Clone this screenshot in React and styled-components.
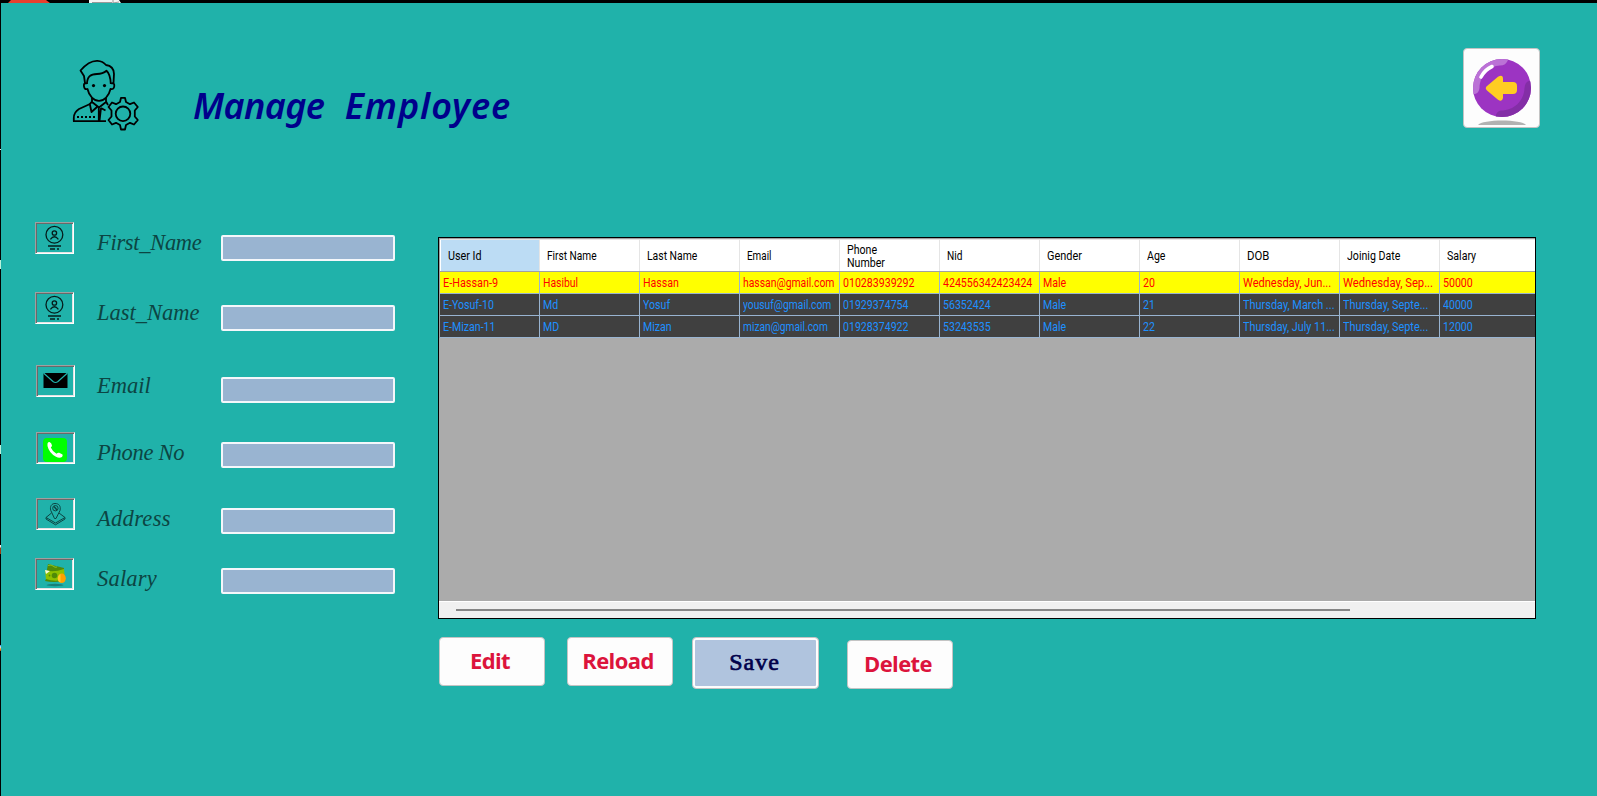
import React from "react";
import styled, { createGlobalStyle } from "styled-components";

const GlobalStyle = createGlobalStyle`
  * { box-sizing: border-box; }
  body { margin: 0; background: #20b2aa; }
`;

const Screen = styled.div`
  width: 1597px;
  height: 796px;
  display: grid;
  grid-template: 3px 1fr / 1px 1fr;
  background: #20b2aa;
  overflow: hidden;
`;

const TopStrip = styled.div`
  grid-column: 1 / -1;
  background: #000;
  display: flex;
  svg { display: block; }
`;

const SideStrip = styled.div`
  background: linear-gradient(
    #000 146px, #e8f4f0 146px, #e8f4f0 147px, #000 147px,
    #000 257px, #b9f3dc 257px, #b9f3dc 266px, #000 266px,
    #000 442px, #b9f3dc 442px, #b9f3dc 451px, #000 451px,
    #000 542px, #f3e9ee 542px, #f3e9ee 544px, #9a3c10 545px, #9a3c10 551px, #000 551px,
    #000 642px, #1f7fe0 642px, #d8ecff 644px, #ff9c1a 646px, #a04a10 648px, #000 648px
  );
`;

const Window = styled.main`
  display: flex;
  flex-direction: column;
`;

const Header = styled.header`
  height: 216px;
  display: flex;
  align-items: flex-start;
  padding: 45px 57px 0 70px;
`;

const HeaderArt = styled.div`
  width: 70px;
  height: 76px;
  margin-top: 10px;
  svg { display: block; }
`;

const Title = styled.h1`
  margin: 32px 0 0 52px;
  flex: 1;
  font: italic 600 36px/52px "Noto Sans", "Open Sans", sans-serif;
  word-spacing: 11px;
  color: #00008b;
  white-space: nowrap;
`;

const TitleWord = styled.span`
  letter-spacing: ${(p) => p.$track}px;
`;

const BackButton = styled.button`
  width: 77px;
  height: 80px;
  padding: 0;
  border: 1px solid #c4c4c4;
  border-radius: 4px;
  background: #fdfdfd;
  svg { display: block; }
`;

const Content = styled.div`
  display: flex;
`;

const Form = styled.form`
  width: 437px;
  padding: 3px 0 0 34px;
`;

const Field = styled.div`
  display: flex;
  align-items: flex-start;
  height: ${(p) => p.$height}px;
`;

const IconFrame = styled.div`
  width: 39px;
  height: 32px;
  margin-left: ${(p) => p.$indent}px;
  margin-right: ${(p) => 23 - p.$indent}px;
  padding: 1px;
  border: 1px solid;
  border-color: #a0a0a0 #fff #fff #a0a0a0;
  box-shadow: inset 1px 1px #696969, inset -1px -1px #e3e3e3;
  svg { display: block; }
`;

const FieldLabel = styled.label`
  width: 124px;
  padding-top: 8px;
  font: italic 400 22.5px/26px "Liberation Serif", serif;
  letter-spacing: ${(p) => p.$track}px;
  color: #0c4543;
  white-space: nowrap;
`;

const FieldInput = styled.input`
  width: 174px;
  height: 26px;
  margin-top: ${(p) => p.$drop}px;
  padding: 0 4px;
  border: 2px solid #f4f7fb;
  border-radius: 2px;
  background: #99b4d1;
`;

const Workspace = styled.section`
  width: 1098px;
  padding-top: 18px;
`;

const Grid = styled.div`
  height: 382px;
  border: 1px solid #000;
  background: #ababab;
  display: flex;
  flex-direction: column;
  font: 13px/16px "Roboto", sans-serif;
  overflow: hidden;
`;

const HeadRow = styled.div`
  display: flex;
  width: 1096px;
  height: 34px;
  flex: none;
  border-top: 1px solid #a0a0a0;
  border-left: 1px solid #a0a0a0;
  border-bottom: 1px solid #a0a0a0;
  background: #fff;
  overflow: hidden;
`;

const HeadCell = styled.div`
  flex: 0 0 100px;
  min-width: 0;
  display: flex;
  align-items: center;
  padding: 0 12px 0 ${(p) => (p.$current ? 8 : 7)}px;
  line-height: 13px;
  color: #000;
  border-right: 1px solid #e5e5e5;
  border-top: 1px solid #e5e5e5;
  ${(p) => p.$current && "background: #bcdcf4; box-shadow: inset 1px 0 #fff;"}
`;

const BodyRow = styled.div`
  display: flex;
  width: 1096px;
  height: 22px;
  flex: none;
  border-left: 1px solid #a0a0a0;
  background: ${(p) => (p.$active ? "#ffff00" : "#404040")};
  color: ${(p) => (p.$active ? "#ff0000" : "#1e90ff")};
  overflow: hidden;
`;

const Cell = styled.div`
  flex: 0 0 100px;
  min-width: 0;
  padding: 3px 0 0 3px;
  border-right: 1px solid #99b4d1;
  border-bottom: 1px solid #99b4d1;
  white-space: nowrap;
  overflow: hidden;
`;

const Narrow = styled.span`
  display: inline-block;
  transform: scaleX(${(p) => p.$ratio});
  transform-origin: left;
`;

const Scrollbar = styled.div`
  height: 17px;
  margin-top: auto;
  border-top: 1px solid #fff;
  background: #f0f0f0;
  padding: 7px 0 0 17px;
`;

const Thumb = styled.div`
  width: 894px;
  height: 2px;
  background: #858585;
`;

const Actions = styled.div`
  display: flex;
  align-items: flex-start;
  padding: 18px 0 0 1px;
`;

const ActionButton = styled.button`
  width: 106px;
  height: 49px;
  margin: ${(p) => p.$margin};
  padding: 0 4px 3px 0;
  border: 1px solid #c4c4c4;
  border-radius: 4px;
  background: #fdfdfd;
  font: 700 22px/30px "Open Sans", "Noto Sans", sans-serif;
  letter-spacing: -0.6px;
  color: #dc143c;
`;

const SaveButton = styled(ActionButton)`
  width: 127px;
  height: 52px;
  padding: 0 2px 2px 0;
  background: #b0c4de;
  box-shadow: inset 0 0 0 2px #fdfdfd;
  font: 400 24px/30px "Liberation Serif", serif;
  letter-spacing: 1px;
  -webkit-text-stroke: 0.7px #00004b;
  color: #00004b;
`;

const TopArt = () => (
  <svg width="130" height="3">
    <path d="M8 3 L11 0 H46 L50 3Z" fill="#e8402f" />
    <path d="M89 0h30l2 3H89z" fill="#f5f5f5" />
    <path d="M92 2.5h20M113 0v3l6-1" stroke="#999" fill="none" />
  </svg>
);

const EmployeeArt = () => (
  <svg width="70" height="76" viewBox="71 58 70 76" fill="none" stroke="#000" strokeWidth="1.8" strokeLinejoin="round">
    <path d="M85 83 L84 76 L80.500 70.500 C86 64 92 60.500 97.500 60.800 C102 61 104 62.500 106 65 C111 65.500 113.800 69 114 74 L113.500 83" />
    <path d="M87 84 C87 76 91 74 97 74 C102 74 104 73 106.500 70.800 C109 73 110.500 76 110.800 84" />
    <path d="M87 83.500 C84 82.500 83.600 84.500 84 86.500 C84.400 89 85.500 89.500 87.500 89 C89 96 94 100.800 99 100.800 C104 100.800 109 96 110.500 89 C113 89.500 114 88.500 114.300 86 C114.600 83.500 113 82.800 111 83.500" />
    <path d="M92 98 V102 L99 107.500 L106 102 V98 M92 101.500 L89.800 104 L91.500 112 L97 107 M106 101.500 L108 105 M101 108 L105.500 110.500 M98.800 108 V121 M101 108 L99.500 121" />
    <path d="M90 104 L79 109 C75 111.500 73.800 114 73.800 118 V121.200 H106" />
    <path d="M77 117h20" strokeDasharray="2 2" />
    <path d="M121 97.800 h4 l1 4.200 4 2.200 4-1.700 3.800 4.500-3 3.500 v6 l3 3.500-3.800 4.500-4-1.700-4 2.200-1 4.500h-4l-1-4.500-4-2.200-4 1.700-3.500-4.500 3-3.500v-6l-3-3.500 3.500-4.500 4 1.700 4-2.200z" />
    <circle cx="123" cy="113.800" r="7.300" />
    <circle cx="93.500" cy="85.600" r="1.600" fill="#000" stroke="none" />
    <circle cx="104.500" cy="85.600" r="1.600" fill="#000" stroke="none" />
  </svg>
);

const BackArt = () => (
  <svg width="75" height="78" viewBox="1464 49 75 78">
    <defs><clipPath id="ball"><circle cx="1502" cy="88" r="29" /></clipPath></defs>
    <path d="M1478 125 C1482 119 1522 119 1526 125Z" fill="#b2b2b2" />
    <g clipPath="url(#ball)">
      <rect x="1470" y="55" width="64" height="66" fill="#9c34c2" />
      <path d="M1472 94 V57 H1508 V60 Q1506 65.500 1500 65.500 C1489 66 1480 75 1479.500 88 Q1479 93 1475 94Z" fill="#bb72d6" />
      <path d="M1532 81 H1529 Q1525 82 1524.500 88 C1524 101 1514 110.500 1501 110.500 Q1497 111 1496 115 V119 H1532Z" fill="#832ea6" />
    </g>
    <path d="M1481 77 Q1485 69.500 1492 66.500" stroke="#fff" strokeWidth="3.600" strokeLinecap="round" fill="none" />
    <path d="M1487 86 L1498 76.800 Q1503 74 1503 79 V82 H1513 Q1517 82 1517 86 V90 Q1517 94 1513 94 H1503 V98 Q1502 102.500 1498 99.700 L1487 90.500 Q1484.500 88 1487 86Z" fill="#ffcd23" />
  </svg>
);

const PersonArt = () => (
  <svg width="36" height="28" viewBox="0 0 36 28" fill="none" stroke="#051c1b" strokeWidth="1.300">
    <circle cx="17.400" cy="10.700" r="8.400" />
    <circle cx="17.400" cy="9" r="2.200" />
    <path d="M13.400 15.300 Q17.400 10.200 21.400 15.300" />
    <path d="M11 22h13M13 25h5M20 25h2" strokeWidth="1.500" />
  </svg>
);

const MailArt = () => (
  <svg width="36" height="28" viewBox="0 0 36 28">
    <rect x="5.500" y="6" width="24" height="15" fill="#000" />
    <path d="M5.500 6 L15 14.500 Q17.500 16.500 20 14.500 L29.500 6" fill="none" stroke="#20b2aa" strokeWidth="1.200" />
  </svg>
);

const PhoneArt = () => (
  <svg width="36" height="28" viewBox="0 0 36 28">
    <rect x="5" y="4" width="24" height="24" rx="4" fill="#0f0" />
    <path d="M9.500 9.500 Q10 7.500 11.500 8 Q13.500 8.500 14 11.500 Q14 12.500 12.800 13.500 Q14.500 17.500 18.500 19.700 Q20 18.300 21.200 18.800 L24.500 20.500 Q25 21.500 24 23 Q21.500 24.500 18 22.800 Q11 19 9.500 12Z" fill="#fff" />
  </svg>
);

const PinArt = () => (
  <svg width="36" height="28" viewBox="0 0 36 28" fill="none" stroke="#0c4543" strokeWidth="1" strokeLinejoin="round">
    <path d="M13.500 13 L8 17.500 V19 L17.500 24.800 L27 19 V17.500 L21 13 M8 17.500 L17.500 23 L27 17.500" />
    <path d="M16.500 18.500 L12.800 10.500 C11.500 6 14 3.500 17 3.500 C21 3.500 23 6 22 10.500 L18 18.500Z" />
    <circle cx="17.400" cy="8.200" r="2.700" />
    <path d="M16 6.500 L19 10" strokeWidth="1.500" />
  </svg>
);

const MoneyArt = () => (
  <svg width="36" height="28" viewBox="0 0 36 28">
    <ellipse cx="18" cy="25" rx="8.500" ry="1.200" fill="#187f79" />
    <path d="M11 4 L27 8 V20 L9 15Z" fill="#4f8a08" />
    <path d="M11 5.500 L14 5 L16 6 Q18 8 20 7" stroke="#8dc21c" fill="none" />
    <path d="M8 10 Q16 13 27 9 L28 19 Q18 23 9 20Z" fill="#8dc000" />
    <path d="M9 19 Q17 22 25 20 V21 Q17 23 8 21Z" fill="#4f8a08" />
    <path d="M8 10 L13 11 L9 14Z" fill="#f2fbe0" />
    <circle cx="17.500" cy="15.500" r="2.800" fill="#4f8a08" />
    <circle cx="12.500" cy="15.500" r=".9" fill="#4f8a08" />
    <ellipse cx="24.800" cy="18.300" rx="4" ry="4.800" fill="#ffa000" />
    <path d="M23.500 14 Q20.800 15 20.800 18.500 Q21 22 23.500 22.500Z" fill="#ffc928" />
  </svg>
);

const fields = [
  { label: "First_Name", art: PersonArt, indent: 0, drop: 13, height: 70, track: -0.3 },
  { label: "Last_Name", art: PersonArt, indent: 0, drop: 13, height: 73, track: 0 },
  { label: "Email", art: MailArt, indent: 1, drop: 12, height: 67, track: 0 },
  { label: "Phone No", art: PhoneArt, indent: 1, drop: 10, height: 66, track: -0.25 },
  { label: "Address", art: PinArt, indent: 1, drop: 10, height: 60, track: 0.3 },
  { label: "Salary", art: MoneyArt, indent: 0, drop: 10, height: 40, track: 0.2 },
];

const columns = ["User Id", "First Name", "Last Name", "Email", "Phone Number", "Nid", "Gender", "Age", "DOB", "Joinig Date", "Salary"];

const rows = [
  ["E-Hassan-9", "Hasibul", "Hassan", "hassan@gmail.com", "010283939292", "424556342423424", "Male", "20", "Wednesday, Jun...", "Wednesday, Sep...", "50000"],
  ["E-Yosuf-10", "Md", "Yosuf", "yousuf@gmail.com", "01929374754", "56352424", "Male", "21", "Thursday, March ...", "Thursday, Septe...", "40000"],
  ["E-Mizan-11", "MD", "Mizan", "mizan@gmail.com", "01928374922", "53243535", "Male", "22", "Thursday, July 11...", "Thursday, Septe...", "12000"],
];

// Horizontal condensing per text; anything absent uses the default.
const condensed = {
  "User Id": 0.83, "First Name": 0.78, "Last Name": 0.8, Email: 0.76, Nid: 0.78, Gender: 0.84, DOB: 0.875,
  "E-Hassan-9": 0.835, Hasibul: 0.8,
  "hassan@gmail.com": 0.797, "yousuf@gmail.com": 0.79, "mizan@gmail.com": 0.785,
  "Wednesday, Jun...": 0.85, "Wednesday, Sep...": 0.865,
  "Thursday, March ...": 0.84, "Thursday, July 11...": 0.83, "Thursday, Septe...": 0.835,
};

const GridText = ({ children }) => <Narrow $ratio={condensed[children] || 0.815}>{children}</Narrow>;

export default function App() {
  return (
    <>
      <GlobalStyle />
      <Screen>
        <TopStrip><TopArt /></TopStrip>
        <SideStrip />
        <Window>
          <Header>
            <HeaderArt><EmployeeArt /></HeaderArt>
            <Title>
              <TitleWord $track={-0.6}>Manage</TitleWord>{" "}
              <TitleWord $track={0.9}>Employee</TitleWord>
            </Title>
            <BackButton type="button" aria-label="Back"><BackArt /></BackButton>
          </Header>
          <Content>
            <Form>
              {fields.map(({ label, art: Art, indent, drop, height, track }) => (
                <Field key={label} $height={height}>
                  <IconFrame $indent={indent}><Art /></IconFrame>
                  <FieldLabel htmlFor={label} $track={track}>{label}</FieldLabel>
                  <FieldInput id={label} $drop={drop} />
                </Field>
              ))}
            </Form>
            <Workspace>
              <Grid>
                <HeadRow>
                  {columns.map((c, i) => (
                    <HeadCell key={c} $current={i === 0}><GridText>{c}</GridText></HeadCell>
                  ))}
                </HeadRow>
                {rows.map((r, i) => (
                  <BodyRow key={r[0]} $active={i === 0}>
                    {r.map((v, j) => <Cell key={j}><GridText>{v}</GridText></Cell>)}
                  </BodyRow>
                ))}
                <Scrollbar><Thumb /></Scrollbar>
              </Grid>
              <Actions>
                <ActionButton type="button" $margin="0 22px 0 0">Edit</ActionButton>
                <ActionButton type="button" $margin="0 19px 0 0">Reload</ActionButton>
                <SaveButton type="button" $margin="0 28px 0 0">Save</SaveButton>
                <ActionButton type="button" $margin="3px 0 0 0">Delete</ActionButton>
              </Actions>
            </Workspace>
          </Content>
        </Window>
      </Screen>
    </>
  );
}
